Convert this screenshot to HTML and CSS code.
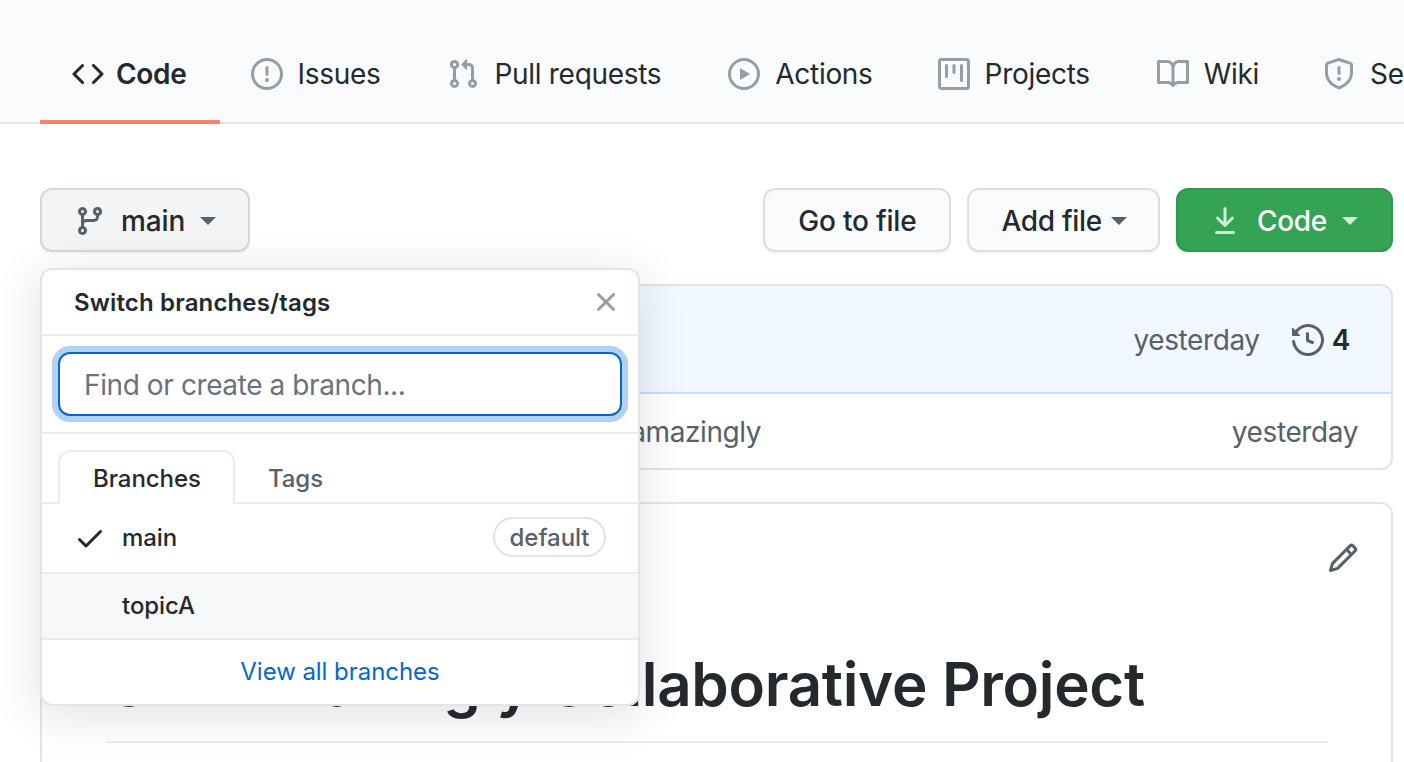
FILE: index.html
```html
<!DOCTYPE html>
<html lang="en">
<head>
  <meta charset="UTF-8" />
  <meta name="viewport" content="width=device-width, initial-scale=1.0" />
  <title>Repository - Code</title>
  <link rel="stylesheet" href="styles.css">
</head>
<body>
  <nav class="tabnav">
    <a class="tab selected">
      <svg class="tab-icon dark" viewBox="0 0 16 16"><path fill-rule="evenodd" d="M4.72 3.22a.75.75 0 011.06 1.06L2.06 8l3.72 3.72a.75.75 0 11-1.06 1.06L.47 8.53a.75.75 0 010-1.06l4.25-4.25zm6.56 0a.75.75 0 10-1.06 1.06L13.94 8l-3.72 3.72a.75.75 0 101.06 1.06l4.25-4.25a.75.75 0 000-1.06l-4.25-4.25z"/></svg>
      Code
    </a>
    <a class="tab">
      <svg class="tab-icon" viewBox="0 0 16 16"><path fill-rule="evenodd" d="M8 1.5a6.5 6.5 0 100 13 6.5 6.5 0 000-13zM0 8a8 8 0 1116 0A8 8 0 010 8zm9 3a1 1 0 11-2 0 1 1 0 012 0zm-.25-6.25a.75.75 0 00-1.5 0v3.5a.75.75 0 001.5 0v-3.5z"/></svg>
      Issues
    </a>
    <a class="tab">
      <svg class="tab-icon" viewBox="0 0 16 16"><path fill-rule="evenodd" d="M7.177 3.073L9.573.677A.25.25 0 0110 .854v4.792a.25.25 0 01-.427.177L7.177 3.427a.25.25 0 010-.354zM3.75 2.5a.75.75 0 100 1.5.75.75 0 000-1.5zm-2.25.75a2.25 2.25 0 113 2.122v5.256a2.251 2.251 0 11-1.5 0V5.372A2.25 2.25 0 011.5 3.25zM11 2.5h-1V4h1a1 1 0 011 1v5.628a2.251 2.251 0 101.5 0V5A2.5 2.5 0 0011 2.5zm1 10.25a.75.75 0 111.5 0 .75.75 0 01-1.5 0zM3.75 12a.75.75 0 100 1.5.75.75 0 000-1.5z"/></svg>
      Pull requests
    </a>
    <a class="tab tab-actions">
      <svg class="tab-icon" viewBox="0 0 16 16"><path fill-rule="evenodd" d="M1.5 8a6.5 6.5 0 1113 0 6.5 6.5 0 01-13 0zM8 0a8 8 0 100 16A8 8 0 008 0zM6.379 5.227A.25.25 0 006 5.442v5.117a.25.25 0 00.379.214l4.264-2.559a.25.25 0 000-.428L6.379 5.227z"/></svg>
      Actions
    </a>
    <a class="tab">
      <svg class="tab-icon" viewBox="0 0 16 16"><path fill-rule="evenodd" d="M1.75 0A1.75 1.75 0 000 1.75v12.5C0 15.216.784 16 1.75 16h12.5A1.75 1.75 0 0016 14.25V1.75A1.75 1.75 0 0014.25 0H1.75zM1.5 1.75a.25.25 0 01.25-.25h12.5a.25.25 0 01.25.25v12.5a.25.25 0 01-.25.25H1.75a.25.25 0 01-.25-.25V1.75zM11.75 3a.75.75 0 00-.75.75v7.5a.75.75 0 001.5 0v-7.5a.75.75 0 00-.75-.75zm-8.25.75a.75.75 0 011.5 0v5.5a.75.75 0 01-1.5 0v-5.5zM8 3a.75.75 0 00-.75.75v3.5a.75.75 0 001.5 0v-3.5A.75.75 0 008 3z"/></svg>
      Projects
    </a>
    <a class="tab tab-wiki">
      <svg class="tab-icon" viewBox="0 0 16 16"><path fill-rule="evenodd" d="M0 1.75A.75.75 0 01.75 1h4.253c1.227 0 2.317.59 3 1.501A3.744 3.744 0 0111.006 1h4.245a.75.75 0 01.75.75v10.5a.75.75 0 01-.75.75h-4.507a2.25 2.25 0 00-1.591.659l-.622.621a.75.75 0 01-1.06 0l-.622-.621A2.25 2.25 0 005.258 13H.75a.75.75 0 01-.75-.75V1.75zm8.755 3a2.25 2.25 0 012.25-2.25H14.5v9h-3.757c-.71 0-1.4.201-1.992.572l.004-7.322zm-1.504 7.324l.004-5.073-.002-2.253A2.25 2.25 0 005.003 2.5H1.5v9h3.757a3.75 3.75 0 011.994.574z"/></svg>
      Wiki
    </a>
    <a class="tab">
      <svg class="tab-icon" viewBox="0 0 16 16"><path fill-rule="evenodd" d="M7.467.133a1.75 1.75 0 011.066 0l5.25 1.68A1.75 1.75 0 0115 3.48V7c0 1.566-.32 3.182-1.303 4.682-.983 1.498-2.585 2.813-5.032 3.855a1.7 1.7 0 01-1.33 0c-2.447-1.042-4.049-2.357-5.032-3.855C1.32 10.182 1 8.566 1 7V3.48a1.75 1.75 0 011.217-1.667l5.25-1.68zm.61 1.429a.25.25 0 00-.153 0l-5.25 1.68a.25.25 0 00-.174.238V7c0 1.358.275 2.666 1.057 3.86.784 1.194 2.121 2.34 4.366 3.297a.2.2 0 00.154 0c2.245-.956 3.582-2.104 4.366-3.298C13.225 9.666 13.5 8.36 13.5 7V3.48a.25.25 0 00-.174-.237l-5.25-1.68zM9 10.5a1 1 0 11-2 0 1 1 0 012 0zm-.25-5.75a.75.75 0 10-1.5 0v3a.75.75 0 001.5 0v-3z"/></svg>
      Security
    </a>
  </nav>

  <main class="repo">
    <div class="toolbar">
      <div class="branch-wrap">
        <button class="btn btn-branch">
          <svg class="btn-icon" viewBox="0 0 16 16"><path fill-rule="evenodd" d="M11.75 2.5a.75.75 0 100 1.5.75.75 0 000-1.5zm-2.25.75a2.25 2.25 0 113 2.122V6A2.5 2.5 0 0110 8.5H6a1 1 0 00-1 1v1.128a2.251 2.251 0 11-1.5 0V5.372a2.25 2.25 0 111.5 0v1.836A2.492 2.492 0 016 7h4a1 1 0 001-1v-.628A2.25 2.25 0 019.5 3.25zM4.25 12a.75.75 0 100 1.5.75.75 0 000-1.5zM3.5 3.25a.75.75 0 111.5 0 .75.75 0 01-1.5 0z"/></svg>
          main
          <span class="caret"></span>
        </button>

        <div class="menu">
          <div class="menu-header">
            <span>Switch branches/tags</span>
            <svg class="menu-close" viewBox="0 0 16 16"><path fill-rule="evenodd" d="M3.72 3.72a.75.75 0 011.06 0L8 6.94l3.22-3.22a.75.75 0 111.06 1.06L9.06 8l3.22 3.22a.75.75 0 11-1.06 1.06L8 9.06l-3.22 3.22a.75.75 0 01-1.06-1.06L6.94 8 3.72 4.78a.75.75 0 010-1.06z"/></svg>
          </div>
          <div class="menu-filter">
            <input class="filter-input" type="text" placeholder="Find or create a branch..." />
          </div>
          <div class="menu-tabs">
            <span class="menu-tab active">Branches</span>
            <span class="menu-tab">Tags</span>
          </div>
          <div class="menu-item">
            <svg class="check" viewBox="0 0 16 16"><path fill-rule="evenodd" d="M13.78 4.22a.75.75 0 010 1.06l-7.25 7.25a.75.75 0 01-1.06 0L2.22 9.28a.75.75 0 011.06-1.06L6 10.94l6.72-6.72a.75.75 0 011.06 0z"/></svg>
            <span class="item-name">main</span>
            <span class="badge">default</span>
          </div>
          <div class="menu-item hovered">
            <span class="item-name">topicA</span>
          </div>
          <a class="menu-footer">View all branches</a>
        </div>
      </div>

      <div class="toolbar-right">
        <button class="btn btn-goto">Go to file</button>
        <button class="btn btn-add">Add file <span class="caret"></span></button>
        <button class="btn btn-green">
          <svg class="btn-icon" viewBox="0 0 16 16"><path fill-rule="evenodd" d="M7.47 10.78a.75.75 0 001.06 0l3.75-3.75a.75.75 0 00-1.06-1.06L8.75 8.44V1.75a.75.75 0 00-1.5 0v6.69L4.78 5.97a.75.75 0 00-1.06 1.06l3.75 3.75zM3.75 13a.75.75 0 000 1.5h8.5a.75.75 0 000-1.5h-8.5z"/></svg>
          Code
          <span class="caret"></span>
        </button>
      </div>
    </div>

    <section class="files">
      <div class="commit-bar">
        <span class="muted">yesterday</span>
        <svg class="history" viewBox="0 0 16 16"><path fill-rule="evenodd" d="M1.643 3.143L.427 1.927A.25.25 0 000 2.104V5.75c0 .138.112.25.25.25h3.646a.25.25 0 00.177-.427L2.715 4.215a6.5 6.5 0 11-1.18 4.458.75.75 0 10-1.493.154 8.001 8.001 0 101.6-5.684zM7.75 4a.75.75 0 01.75.75v2.992l2.028.812a.75.75 0 01-.557 1.392l-2.5-1A.75.75 0 017 8.25v-3.5A.75.75 0 017.75 4z"/></svg>
        <strong class="commit-count">4</strong>
      </div>
      <div class="file-row">
        <span class="file-name">README.md</span>
        <span class="file-msg muted">make it work amazingly</span>
        <span class="muted">yesterday</span>
      </div>
    </section>

    <section class="readme">
      <div class="readme-top">
        <svg class="pencil" viewBox="0 0 16 16"><path fill-rule="evenodd" d="M11.013 1.427a1.75 1.75 0 012.474 0l1.086 1.086a1.75 1.75 0 010 2.474l-8.61 8.61c-.21.21-.47.364-.756.445l-3.251.93a.75.75 0 01-.927-.928l.929-3.25a1.75 1.75 0 01.445-.758l8.61-8.61zm1.414 1.06a.25.25 0 00-.354 0L10.811 3.75l1.439 1.44 1.263-1.263a.25.25 0 000-.354l-1.086-1.086zM11.189 6.25L9.75 4.81l-6.286 6.287a.25.25 0 00-.064.108l-.558 1.953 1.953-.558a.249.249 0 00.108-.064l6.286-6.286z"/></svg>
      </div>
      <h1 class="readme-title">Our Amazingly Collaborative Project</h1>
    </section>
  </main>
</body>
</html>
```

FILE: styles.css
```css
* {
  box-sizing: border-box;
}
html, body {
  height: 762px;
  overflow: hidden;
}
body {
  margin: 0;
  background: #fff;
  color: #24292e;
  font-family: Inter, "Noto Sans", sans-serif;
  font-size: 28px;
  letter-spacing: -0.3px;
}
svg {
  fill: currentColor;
  flex: none;
  display: block;
}

/* top tabs */
.tabnav {
  display: flex;
  height: 124px;
  padding: 24px 0 0 40px;
  background: #fafbfc;
  box-shadow: inset 0 -2px 0 #e1e4e8;
  white-space: nowrap;
  overflow: hidden;
}
.tab {
  display: flex;
  align-items: center;
  gap: 15px;
  height: 100px;
  padding: 4px 32px 0;
  margin-right: 3px;
  border-bottom: 4px solid transparent;
  color: #24292e;
  flex: none;
}
.tab.selected {
  border-bottom-color: #f9826c;
  font-weight: 600;
  gap: 12px;
  padding-right: 33px;
  margin-right: -1px;
}
.tab.tab-actions {
  margin-right: 1px;
}
.tab.tab-wiki {
  margin-right: 0;
}
.tab-icon {
  width: 32px;
  height: 32px;
  color: #959da5;
}
.tab-icon.dark {
  color: #24292e;
}

/* buttons row */
.repo {
  padding: 64px 11px 0 40px;
}
.toolbar {
  display: flex;
  justify-content: space-between;
  align-items: flex-start;
}
.branch-wrap {
  position: relative;
}
.toolbar-right {
  display: flex;
  gap: 16px;
}
.btn {
  display: flex;
  align-items: center;
  height: 64px;
  padding: 1px 32px 0;
  background: #fafbfc;
  border: 2px solid #dcdee0;
  border-radius: 12px;
  box-shadow: 0 2px 0 rgba(27, 31, 35, 0.04);
  color: #24292e;
  font: 500 28px Inter, "Noto Sans", sans-serif;
  letter-spacing: -0.3px;
}
.btn-branch {
  width: 210px;
  background: #f3f4f6;
  gap: 15px;
  border-color: #d5d7da;
  letter-spacing: -0.1px;
}
.btn-branch .caret {
  margin-left: 0;
}
.btn-icon {
  width: 32px;
  height: 32px;
  color: #586069;
}
.btn-goto {
  padding: 1px 33px 0;
  letter-spacing: -0.2px;
}
.btn-add {
  gap: 8px;
  padding: 1px 31px 0 32px;
}
.btn-green {
  gap: 16px;
  padding: 1px 33px 0 31px;
  background: #34a354;
  border-color: #2f9a4d;
  color: #fff;
}
.btn-green .btn-icon {
  color: #d3ecd9;
}
.btn-green .caret {
  margin-left: -1px;
  border-top-color: #d3ecd9;
}
.caret {
  display: block;
  width: 0;
  height: 0;
  margin-left: 1px;
  border: 8px solid transparent;
  border-top-color: #586069;
  border-bottom: 0;
}

/* branch dropdown */
.menu {
  position: absolute;
  top: 80px;
  left: 0;
  z-index: 10;
  width: 600px;
  background: #fff;
  border: 2px solid #e1e4e8;
  border-radius: 12px;
  box-shadow: 0 8px 48px rgba(27, 31, 35, 0.14);
  font-size: 24px;
  letter-spacing: -0.05px;
  overflow: hidden;
}
.menu-header {
  display: flex;
  justify-content: space-between;
  align-items: center;
  height: 66px;
  padding: 0 16px 0 32px;
  border-bottom: 2px solid #eaecef;
  font-weight: 600;
  letter-spacing: 0.15px;
}
.menu-close {
  width: 32px;
  height: 32px;
  color: #959da5;
}
.menu-filter {
  height: 98px;
  padding: 16px;
  border-bottom: 2px solid #eaecef;
}
.filter-input {
  display: block;
  width: 100%;
  height: 64px;
  padding: 2px 24px 0;
  border: 2px solid #0366d6;
  border-radius: 12px;
  box-shadow: 0 0 0 6px rgba(3, 102, 214, 0.3);
  outline: none;
  color: #24292e;
  font: 400 28px Inter, "Noto Sans", sans-serif;
  letter-spacing: -0.4px;
}
.filter-input::placeholder {
  color: #6a737d;
  opacity: 1;
}
.menu-tabs {
  display: flex;
  height: 70px;
  padding: 16px 16px 0;
  border-bottom: 2px solid #eaecef;
}
.menu-tab {
  display: flex;
  align-items: center;
  height: 54px;
  margin-left: -2px;
  padding: 0 33px;
  border: 2px solid transparent;
  border-bottom: 0;
  border-radius: 12px 12px 0 0;
  color: #586069;
  font-weight: 500;
}
.menu-tab.active {
  margin-left: 0;
  padding: 0 32px 0 33px;
  background: #fff;
  border-color: #eaecef;
  color: #24292e;
}
.menu-item {
  display: flex;
  align-items: center;
  height: 70px;
  padding: 0 32px 2px 80px;
  border-bottom: 2px solid #eaecef;
  position: relative;
  font-weight: 500;
}
.menu-item.hovered {
  height: 66px;
  background: #f6f8fa;
}
.check {
  position: absolute;
  left: 32px;
  top: 18px;
  width: 32px;
  height: 32px;
}
.item-name {
  flex: 1;
}
.badge {
  display: flex;
  align-items: center;
  height: 40px;
  padding: 0 14.5px;
  border: 2px solid #e1e4e8;
  border-radius: 20px;
  color: #586069;
}
.menu-footer {
  display: block;
  height: 64px;
  line-height: 64px;
  text-align: center;
  color: #0366d6;
  font-weight: 400;
}

/* file list */
.files {
  margin-top: 32px;
  border: 2px solid #e1e4e8;
  border-radius: 12px;
  overflow: hidden;
}
.commit-bar {
  display: flex;
  justify-content: flex-end;
  align-items: center;
  height: 110px;
  padding: 2px 41px 0 0;
  background: #f1f8ff;
  border: 2px solid #c8e1ff;
  margin: -2px -2px 0;
  border-radius: 12px 12px 0 0;
}
.muted {
  color: #586069;
  letter-spacing: -0.4px;
}
.history {
  width: 32px;
  height: 32px;
  margin: 0 8px 0 32px;
  color: #586069;
}
.commit-count {
  font-weight: 600;
}
.file-row {
  display: flex;
  align-items: center;
  height: 74px;
  padding: 2px 33px 0 32px;
}
.file-name {
  width: 385px;
}
.file-msg {
  flex: 1;
}

/* readme */
.readme {
  margin-top: 32px;
  height: 400px;
  border: 2px solid #e1e4e8;
  border-radius: 12px;
  padding: 0 64px;
}
.readme-top {
  display: flex;
  justify-content: flex-end;
  padding: 38px 0 0;
  margin-right: -32px;
  height: 132px;
}
.pencil {
  width: 32px;
  height: 32px;
  color: #586069;
}
.readme-title {
  margin: 0;
  height: 107px;
  padding-top: 7px;
  border-bottom: 2px solid #eaecef;
  font-size: 60px;
  line-height: 82px;
  font-weight: 600;
  white-space: nowrap;
}
```
